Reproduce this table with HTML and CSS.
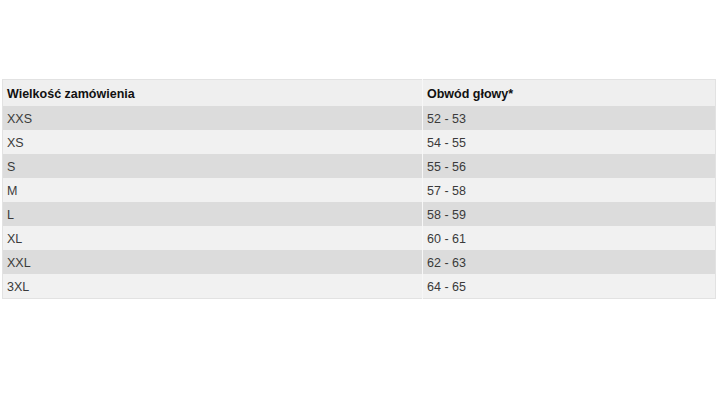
FILE: index.html
```html
<!DOCTYPE html>
<html lang="pl">
<head>
<meta charset="utf-8">
<link rel="stylesheet" href="styles.css">
</head>
<body>
<div class="wrap">
<table class="sizes">
<thead>
<tr><th class="c1">Wielkość zamówienia</th><th class="c2">Obwód głowy*</th></tr>
</thead>
<tbody>
<tr class="dark"><td>XXS</td><td class="c2">52 - 53</td></tr>
<tr><td>XS</td><td class="c2">54 - 55</td></tr>
<tr class="dark"><td>S</td><td class="c2">55 - 56</td></tr>
<tr><td>M</td><td class="c2">57 - 58</td></tr>
<tr class="dark"><td>L</td><td class="c2">58 - 59</td></tr>
<tr><td>XL</td><td class="c2">60 - 61</td></tr>
<tr class="dark"><td>XXL</td><td class="c2">62 - 63</td></tr>
<tr><td>3XL</td><td class="c2">64 - 65</td></tr>
</tbody>
</table>
</div>
</body>
</html>
```
FILE: styles.css
```css
html, body {
  margin: 0;
  padding: 0;
  background: #fff;
}
.wrap {
  padding: 79px 0 0 2px;
}
.sizes {
  width: 714px;
  border-collapse: collapse;
  border: 1px solid #e2e2e2;
  font-family: "Liberation Sans", Arial, sans-serif;
  font-size: 12.5px;
  color: #3a3a3a;
}
.sizes th {
  text-align: left;
  font-weight: bold;
  color: #111;
  background: #efefef;
  height: 24px;
  padding: 2px 0 0 4px;
}
.sizes td {
  height: 22px;
  padding: 2px 0 0 4px;
  background: #f1f1f1;
}
.sizes tr.dark td {
  background: #dcdcdc;
}
.sizes .c1 {
  width: 415px;
}
.sizes .c2 {
  border-left: 1px solid #f7f7f7;
}
```
